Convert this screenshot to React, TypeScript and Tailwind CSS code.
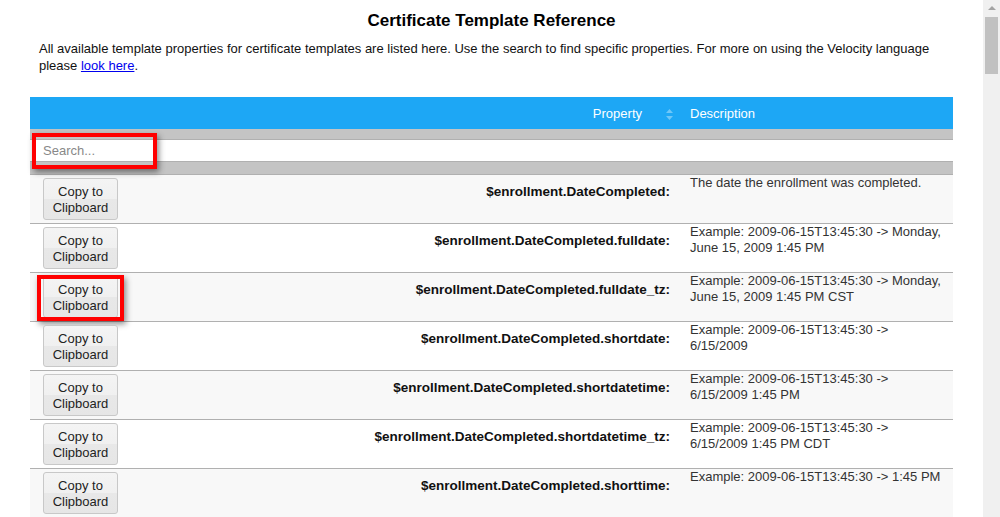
import React from 'react';

const rows = [
    { prop: '$enrollment.DateCompleted:', desc: ['The date the enrollment was completed.'] },
    { prop: '$enrollment.DateCompleted.fulldate:', desc: ['Example: 2009-06-15T13:45:30 -> Monday,', 'June 15, 2009 1:45 PM'] },
    { prop: '$enrollment.DateCompleted.fulldate_tz:', desc: ['Example: 2009-06-15T13:45:30 -> Monday,', 'June 15, 2009 1:45 PM CST'], marked: true },
    { prop: '$enrollment.DateCompleted.shortdate:', desc: ['Example: 2009-06-15T13:45:30 ->', '6/15/2009'] },
    { prop: '$enrollment.DateCompleted.shortdatetime:', desc: ['Example: 2009-06-15T13:45:30 ->', '6/15/2009 1:45 PM'] },
    { prop: '$enrollment.DateCompleted.shortdatetime_tz:', desc: ['Example: 2009-06-15T13:45:30 ->', '6/15/2009 1:45 PM CDT'] },
    { prop: '$enrollment.DateCompleted.shorttime:', desc: ['Example: 2009-06-15T13:45:30 -> 1:45 PM'] },
    { prop: '$enrollment.DateCompleted.time:', desc: ['Example: 2009-06-15T13:45:30 -> 1:45 PM'] },
];

function CopyButton({ marked }: { marked?: boolean }) {
    return (
        <div className="relative w-[75px]">
            <button className="w-[75px] h-[42px] pt-[4px] pb-[3px] rounded-[3px] border border-[#c8c8c8] bg-[linear-gradient(#f4f4f4_0%,#f0f0f0_50%,#e8e8e8_50%,#e6e6e6_100%)] text-[13px] leading-[16px] text-[#222]">
                Copy to
                <br />
                Clipboard
            </button>
            {marked && (
                <div className="absolute left-[-6px] top-[-1px] w-[87px] h-[46px] border-[4px] border-[#ff0000] shadow-[2px_3px_6px_rgba(0,0,0,0.45)] pointer-events-none" />
            )}
        </div>
    );
}

export default function App() {
    return (
        <div className="h-[517px] w-[1000px] overflow-hidden flex bg-white font-['Liberation_Sans',Arial,sans-serif]">
            <main className="flex-1 flex flex-col">
                <h1 className="mt-[11px] text-center text-[17px] leading-[20px] font-bold text-black">
                    Certificate Template Reference
                </h1>
                <p className="mt-[9px] px-[39px] text-[13px] leading-[17px] text-[#111]">
                    All available template properties for certificate templates are listed here. Use the search to find specific properties. For more on using the Velocity language please{' '}
                    <a href="#" className="text-[#0000ee] underline">look here</a>.
                </p>

                <div className="mt-[23px] mx-[30px] w-[923px]">
                    {/* header */}
                    <div className="grid grid-cols-[100px_550px_273px] h-[32px] pt-[2px] bg-[#1da7f5] text-white text-[13px]">
                        <div />
                        <div className="flex items-center justify-end gap-[24px] pr-[7px]">
                            <span>Property</span>
                            <svg width="7" height="12" viewBox="0 0 7 12" className="mt-[1px]">
                                <path d="M3.5 0 L7 4 L0 4 Z" fill="#6fc7f8" />
                                <path d="M0 7 L7 7 L3.5 11 Z" fill="#6fc7f8" />
                            </svg>
                        </div>
                        <div className="flex items-center pl-[10px]">Description</div>
                    </div>

                    {/* filter row */}
                    <div className="relative bg-[#c4c4c4] pt-[10px] border-b border-[#b0b0b0]">
                        <div className="h-[23px] bg-white border-y border-[#b0b0b0] flex items-center">
                            <input
                                placeholder="Search..."
                                className="w-full h-full pl-[13px] text-[13px] text-[#333] placeholder:text-[#888] bg-transparent outline-none"
                            />
                        </div>
                        <div className="h-[12px]" />
                        <div className="absolute left-[2px] top-[4px] w-[125px] h-[36px] border-[4px] border-[#ff0000] shadow-[2px_3px_6px_rgba(0,0,0,0.45)] pointer-events-none" />
                    </div>

                    {/* rows */}
                    {rows.map((r, i) => (
                        <div
                            key={r.prop}
                            className={`grid grid-cols-[100px_550px_273px] h-[49px] border-b border-[#b0b0b0] ${i % 2 === 0 ? 'bg-[#f8f8f8]' : 'bg-white'}`}
                        >
                            <div className="pl-[13px] pt-[3px]">
                                <CopyButton marked={r.marked} />
                            </div>
                            <div className="pr-[10px] pt-[9px] text-right text-[13.5px] leading-[16px] font-bold text-[#111] whitespace-nowrap">
                                {r.prop}
                            </div>
                            <div className="pl-[10px] text-[13px] leading-[16px] text-[#333]">
                                {r.desc.map((l) => (
                                    <div key={l} className="whitespace-nowrap">{l}</div>
                                ))}
                            </div>
                        </div>
                    ))}
                </div>
            </main>

            {/* scrollbar */}
            <aside className="w-[17px] bg-[#f0f0f0] flex flex-col items-center">
                <svg width="8" height="5" viewBox="0 0 8 5" className="mt-[6px]">
                    <path d="M4 0 L8 4 L0 4 Z" fill="#a3a3a3" />
                </svg>
                <div className="mt-[6px] w-[13px] h-[57px] bg-[#c1c1c1]" />
            </aside>
        </div>
    );
}
